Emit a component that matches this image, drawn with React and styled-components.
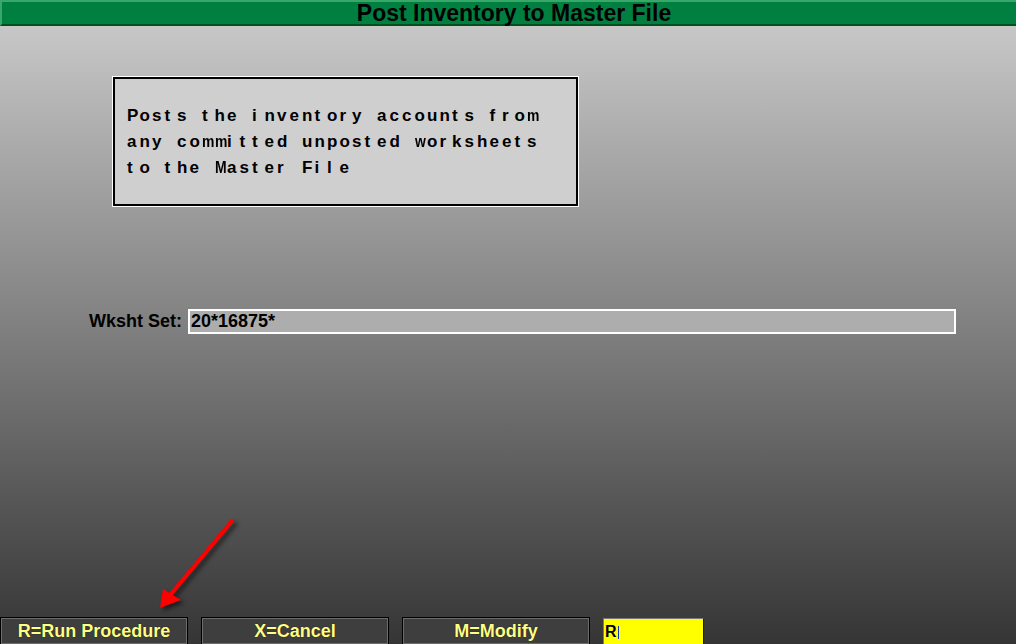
import React from "react";
import styled, { createGlobalStyle } from "styled-components";

const GlobalStyle = createGlobalStyle`
  html, body {
    margin: 0;
    padding: 0;
    overflow: hidden;
  }
  body {
    font-family: "Liberation Sans", Arial, sans-serif;
  }
`;

const Screen = styled.div`
  position: relative;
  width: 1016px;
  height: 644px;
  display: flex;
  flex-direction: column;
  background: linear-gradient(#cdcdcd, #353535);
  overflow: hidden;
`;

const TitleBar = styled.div`
  height: 22px;
  background: #008040;
  border-top: 2px solid #3aa76a;
  border-left: 2px solid #3aa76a;
  border-bottom: 2px solid #004f1c;
  display: flex;
  justify-content: center;
  align-items: center;
  padding-left: 10px;
`;

const Title = styled.h1`
  margin: 0;
  font-size: 23px;
  line-height: 22px;
  font-weight: bold;
  color: #000;
`;

const Body = styled.div`
  flex: 1;
  display: flex;
  flex-direction: column;
  padding: 50px 0 0 112px;
`;

const InfoBox = styled.div`
  box-sizing: border-box;
  width: 465px;
  height: 129px;
  margin: 1px 0 0 1px;
  border: 2px solid #000;
  outline: 1px solid #fff;
  background: #cfcfcf;
  display: flex;
  flex-direction: column;
  padding: 24px 0 0 12px;
`;

const TextLine = styled.div`
  height: 26px;
  line-height: 26px;
  font-size: 17px;
  font-weight: bold;
  color: #000;
  white-space: pre;
`;

/* each character sits in a fixed 12.5px cell, like the terminal grid */
const Cell = styled.span`
  display: inline-block;
  width: 12.5px;
  transform: ${(p) => (p.$wide ? "scaleX(0.82)" : "none")};
  transform-origin: left center;
`;

const FieldRow = styled.div`
  display: flex;
  align-items: center;
  margin: 103px 0 0 -23px;
  height: 25px;
`;

const Label = styled.span`
  font-size: 18px;
  font-weight: bold;
  color: #000;
  margin-right: 6px;
`;

const Field = styled.div`
  width: 763px;
  height: 21px;
  border: 2px solid #fff;
  background: #adadad;
  display: flex;
  align-items: center;
  padding-left: 1px;
  font-size: 18px;
  font-weight: bold;
  color: #000;
`;

const Footer = styled.div`
  display: flex;
  gap: 13px;
  height: 27px;
  align-items: stretch;
`;

const KeyButton = styled.div`
  width: 186px;
  border: 1px solid #000;
  border-bottom: none;
  box-shadow: inset 0 0 0 1px #6c6c6c;
  background: #3e3e3e;
  display: flex;
  justify-content: center;
  align-items: center;
  padding-top: 1px;
  font-size: 18px;
  font-weight: bold;
  color: #ffff84;
  text-shadow: 0 0 1px #000;
`;

const Entry = styled.div`
  width: 98px;
  margin-top: 1px;
  border: 1px solid #7a7a7a;
  border-right-color: #1c1c1c;
  border-bottom: none;
  background: #ffff00;
  display: flex;
  align-items: center;
  padding-left: 1px;
  padding-top: 1px;
  font-size: 16px;
  font-weight: bold;
  color: #000;
`;

const Caret = styled.span`
  display: inline-block;
  width: 1px;
  height: 13px;
  margin-left: 1px;
  background: #1030c0;
`;

const Arrow = styled.svg`
  position: absolute;
  left: 0;
  top: 0;
  width: 1016px;
  height: 644px;
  pointer-events: none;
  filter: drop-shadow(3px 3px 2px rgba(0, 0, 0, 0.55));
`;

const lines = [
  "Posts the inventory accounts from",
  "any committed unposted worksheets",
  "to the Master File",
];

const buttons = ["R=Run Procedure", "X=Cancel", "M=Modify"];

function FixedLine({ text }) {
  return (
    <TextLine>
      {[...text].map((c, i) => (
        <Cell key={i} $wide={"mwM".includes(c)}>
          {c}
        </Cell>
      ))}
    </TextLine>
  );
}

export default function App() {
  return (
    <Screen>
      <GlobalStyle />
      <TitleBar>
        <Title>Post Inventory to Master File</Title>
      </TitleBar>
      <Body>
        <InfoBox>
          {lines.map((l) => (
            <FixedLine key={l} text={l} />
          ))}
        </InfoBox>
        <FieldRow>
          <Label>Wksht Set:</Label>
          <Field>20*16875*</Field>
        </FieldRow>
      </Body>
      <Footer>
        {buttons.map((b) => (
          <KeyButton key={b}>{b}</KeyButton>
        ))}
        <Entry>
          R<Caret />
        </Entry>
      </Footer>
      <Arrow viewBox="0 0 1016 644">
        <line x1="232" y1="521" x2="171" y2="594" stroke="#ff0000" strokeWidth="4" strokeLinecap="round" />
        <polygon points="160,608 163,589 181,600" fill="#ff0000" />
      </Arrow>
    </Screen>
  );
}
